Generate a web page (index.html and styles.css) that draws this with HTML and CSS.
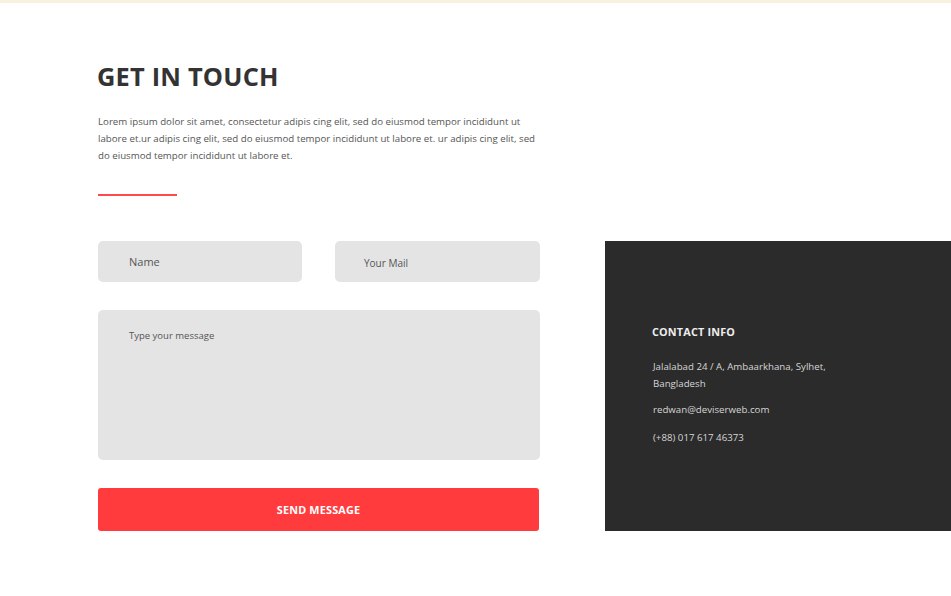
FILE: index.html
```html
<!DOCTYPE html>
<html>
<head>
<meta charset="utf-8">
<link rel="stylesheet" href="styles.css">
</head>
<body>
<div class="topbar"></div>
<section class="contact">
  <h1 class="title">GET IN TOUCH</h1>
  <p class="intro">Lorem ipsum dolor sit amet, consectetur adipis cing elit, sed do eiusmod tempor incididunt ut labore et.ur adipis cing elit, sed do eiusmod tempor incididunt ut labore et. ur adipis cing elit, sed do eiusmod tempor incididunt ut labore et.</p>
  <div class="rule"></div>
  <div class="row">
    <form class="form">
      <div class="pair">
        <div class="field field-name">Name</div>
        <div class="field field-mail">Your Mail</div>
      </div>
      <div class="area">Type your message</div>
      <div class="btn">SEND MESSAGE</div>
    </form>
    <aside class="info">
      <h2 class="info-title">CONTACT INFO</h2>
      <p class="info-line">Jalalabad 24 / A, Ambaarkhana, Sylhet,<br>Bangladesh</p>
      <p class="info-line info-mail">redwan@deviserweb.com</p>
      <p class="info-line">(+88) 017 617 46373</p>
    </aside>
  </div>
</section>
</body>
</html>
```
FILE: styles.css
```css
* { box-sizing: border-box; }
html, body { margin: 0; padding: 0; background: #fff; }
body { font-family: "Open Sans", "Liberation Sans", sans-serif; width: 951px; height: 596px; overflow: hidden; }
.topbar { height: 3px; background: #f7f1df; }
.contact { padding: 55px 0 0 98px; }
.title { margin: 0 0 0 -1px; font-size: 25.4px; font-weight: 700; color: #333; line-height: 36px; letter-spacing: 0.2px; }
.intro { margin: 19px 0 0; width: 440px; font-size: 9.7px; line-height: 17px; color: #555; }
.rule { margin-top: 30px; width: 79px; height: 2px; background: #ff4a4a; }
.row { display: flex; margin-top: 45px; gap: 65px; align-items: stretch; }
.form { width: 442px; display: flex; flex-direction: column; }
.pair { display: flex; gap: 33px; }
.field { height: 41px; background: #e4e4e4; border-radius: 5px; display: flex; align-items: center; color: #555; }
.field-name { width: 204px; padding-left: 31px; font-size: 11px; }
.field-mail { width: 205px; padding-left: 29px; font-size: 10px; padding-top: 2px; }
.area { margin-top: 28px; height: 150px; background: #e4e4e4; border-radius: 5px; padding: 19px 31px; font-size: 9.5px; color: #555; }
.btn { margin-top: 28px; height: 43px; width: 441px; background: #ff3b3e; border-radius: 3px; color: #fff; font-weight: 700; font-size: 10.8px; display: flex; align-items: center; justify-content: center; letter-spacing: 0.2px; }
.info { flex: 1; background: #2b2b2b; padding: 83px 0 0 47px; color: #d6d6d6; }
.info-title { margin: 0 0 18px; font-size: 10.8px; font-weight: 700; color: #eee; line-height: 16px; letter-spacing: 0.2px; }
.info-line { margin: 0 0 9px 1px; font-size: 9.7px; line-height: 17px; }
.info-mail { margin-bottom: 11px; }
```
